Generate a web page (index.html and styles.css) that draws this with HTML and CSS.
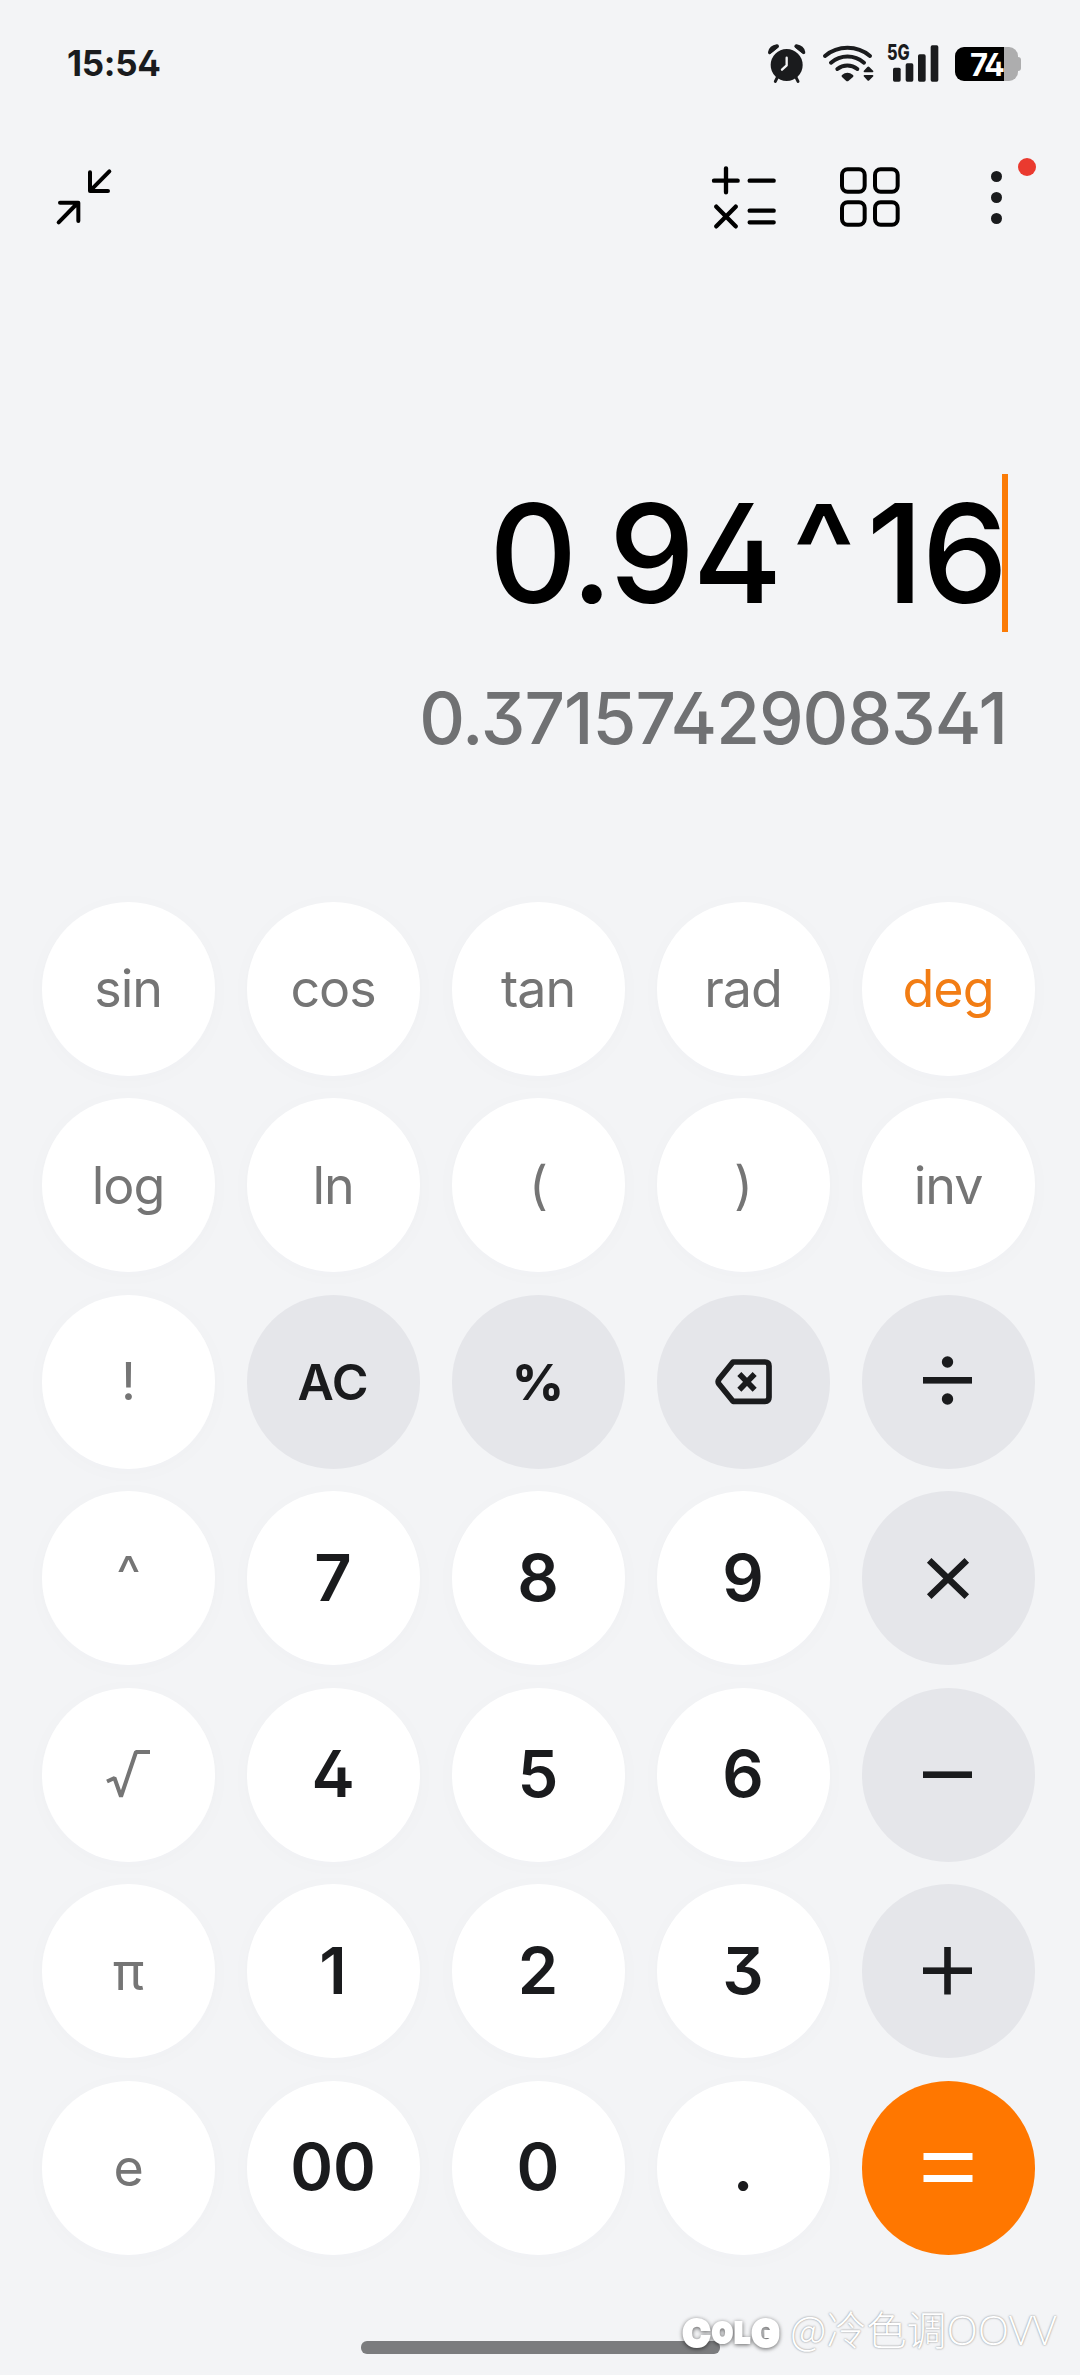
FILE: index.html
```html
<!DOCTYPE html>
<html lang="zh-CN">
<head>
  <meta charset="UTF-8">
  <title>Calculator</title>
  <link rel="stylesheet" href="styles.css">
</head>
<body>

  <!-- Phone status bar -->
  <div class="statusbar">
    <span class="time">15:54</span>
    <div class="status-icons">
      <svg class="alarm" width="37" height="39" viewBox="84 70 111 117">
        <circle cx="140" cy="133" r="48" fill="#1a1b1d"/>
        <path d="M90 95 Q93 80 111 77 Z" stroke="#1a1b1d" stroke-width="12" stroke-linecap="round" stroke-linejoin="round" fill="#1a1b1d"/>
        <path d="M169 77 Q187 80 190 95 Z" stroke="#1a1b1d" stroke-width="12" stroke-linecap="round" stroke-linejoin="round" fill="#1a1b1d"/>
        <path d="M82 110 L122 80 M158 80 L198 110" stroke="#f3f4f6" stroke-width="5"/>
        <path d="M112 170 L106 182 M168 170 L174 182" stroke="#1a1b1d" stroke-width="9" stroke-linecap="round"/>
        <path d="M140 111 V134 L126 147" stroke="#f3f4f6" stroke-width="7" stroke-linecap="round" stroke-linejoin="round" fill="none"/>
      </svg>
      <svg class="wifi" width="51" height="37" viewBox="248 74 153 111">
        <g fill="none" stroke="#1a1b1d" stroke-width="12" stroke-linecap="round">
          <path d="M254 107 A105 105 0 0 1 389 107"/>
          <path d="M272 127 A76 76 0 0 1 371 127"/>
          <path d="M291 146 A48 48 0 0 1 351 146"/>
        </g>
        <path d="M305 164 Q321 150 338 164 Q341 167 338 170 L325 181 Q321 184 317 181 L305 170 Q302 167 305 164 Z" fill="#1a1b1d"/>
        <path d="M370 152 L381 140 Q384 137 387 140 L399 152 Q400 156 396 156 L373 156 Q369 156 370 152 Z M370 168 L381 180 Q384 183 387 180 L399 168 Q400 164 396 164 L373 164 Q369 164 370 168 Z" fill="#1a1b1d"/>
      </svg>
      <svg class="signal" width="52" height="38" viewBox="441 71 156 114">
        <text x="441" y="120" class="signal-label" textLength="68" lengthAdjust="spacingAndGlyphs">5G</text>
        <g fill="#1a1b1d">
          <rect x="459" y="142" width="23" height="42" rx="5"/>
          <rect x="497" y="129" width="23" height="55" rx="5"/>
          <rect x="534" y="102" width="23" height="82" rx="5"/>
          <rect x="572" y="75" width="23" height="109" rx="5"/>
        </g>
      </svg>
      <div class="battery">
        <div class="battery-body"><span>74</span></div>
        <div class="battery-tip"></div>
      </div>
    </div>
  </div>

  <!-- Top toolbar -->
  <div class="toolbar">
    <svg width="56" height="56" viewBox="77 448 168 168" fill="none" stroke="#000" stroke-width="12" stroke-linecap="round" stroke-linejoin="round">
      <path d="M237 455 L180 513 M179 458 V514 H233"/>
      <path d="M85 608 L142 550 M89 549 H144 V604"/>
    </svg>
    <div class="toolbar-right">
      <svg width="64" height="63" viewBox="97 74 192 189" fill="none" stroke="#000" stroke-width="13" stroke-linecap="round">
        <path d="M103 118 H174 M139 81 V153 M210 118 H282 M210 208 H282 M210 243 H282 M110 196 L168 255 M168 196 L110 255"/>
      </svg>
      <svg width="60" height="60" viewBox="480 82 180 180" fill="none" stroke="#000" stroke-width="12">
        <rect x="486" y="89" width="68" height="67" rx="17"/>
        <rect x="585" y="89" width="68" height="67" rx="17"/>
        <rect x="486" y="188" width="68" height="67" rx="17"/>
        <rect x="585" y="188" width="68" height="67" rx="17"/>
      </svg>
      <div class="more">
        <i></i><i></i><i></i>
        <b class="red-dot"></b>
      </div>
    </div>
  </div>

  <!-- Expression and live result -->
  <div class="display">
    <div class="expression"><span class="base">0.94</span><span class="power">^</span><span class="exponent">16</span><div class="cursor"></div></div>
    <div class="result">0.3715742908341</div>
  </div>

  <!-- Keypad -->
  <div class="keypad">
    <div class="key fn">sin</div>
    <div class="key fn">cos</div>
    <div class="key fn">tan</div>
    <div class="key fn">rad</div>
    <div class="key fn active">deg</div>

    <div class="key fn">log</div>
    <div class="key fn">ln</div>
    <div class="key fn">(</div>
    <div class="key fn">)</div>
    <div class="key fn">inv</div>

    <div class="key fn">!</div>
    <div class="key op">AC</div>
    <div class="key op percent">%</div>
    <div class="key op">
      <svg width="57" height="46" viewBox="524 236 171 138" fill="none" stroke="#1a1b1d" stroke-width="17">
        <path d="M578 245 H674 Q686 245 686 257 V351 Q686 363 674 363 H578 L536 311 Q531 304 536 297 Z" stroke-linejoin="round"/>
        <path d="M597 281 L643 328 M643 281 L597 328"/>
      </svg>
    </div>
    <div class="key op">
      <svg width="50" height="50" viewBox="0 0 50 50" fill="#1a1b1d">
        <circle cx="24.5" cy="5" r="5.7"/>
        <rect x="0" y="20" width="49" height="6.6"/>
        <circle cx="24.5" cy="42" r="5.7"/>
      </svg>
    </div>

    <div class="key fn hat">^</div>
    <div class="key num">7</div>
    <div class="key num">8</div>
    <div class="key num">9</div>
    <div class="key op">
      <svg width="50" height="50" viewBox="0 0 50 50" stroke="#1a1b1d" stroke-width="6.5">
        <path d="M6.2 7.3 L43.8 43.7 M43.8 7.3 L6.2 43.7"/>
      </svg>
    </div>

    <div class="key fn">
      <svg width="44" height="50" viewBox="0 0 44 50" fill="none" stroke="#757575" stroke-width="4">
        <path d="M1 31.5 L8.5 28 L15 46.5 L30 2 H44" stroke-linejoin="bevel"/>
      </svg>
    </div>
    <div class="key num">4</div>
    <div class="key num">5</div>
    <div class="key num">6</div>
    <div class="key op">
      <svg width="50" height="50" viewBox="0 0 50 50" fill="#1a1b1d">
        <rect x="0" y="21.4" width="49" height="6.6"/>
      </svg>
    </div>

    <div class="key fn">π</div>
    <div class="key num">1</div>
    <div class="key num">2</div>
    <div class="key num">3</div>
    <div class="key op">
      <svg width="50" height="50" viewBox="0 0 50 50" fill="#1a1b1d">
        <rect x="0" y="21.4" width="49" height="6.6"/>
        <rect x="21.2" y="1" width="6.6" height="47.5"/>
      </svg>
    </div>

    <div class="key fn">e</div>
    <div class="key num">00</div>
    <div class="key num">0</div>
    <div class="key num">.</div>
    <div class="key equals">
      <svg width="50" height="50" viewBox="0 0 50 50" fill="#fff">
        <rect x="0.5" y="10" width="49" height="7"/>
        <rect x="0.5" y="32" width="49" height="7"/>
      </svg>
    </div>
  </div>

  <!-- Gesture bar with the watermark over it -->
  <div class="home-bar"></div>
  <div class="watermark">
    <span class="colg"><span class="big">C</span><span>O</span><span>L</span><span class="big">G</span></span>
    <span class="user">@冷色调<span class="latin">OOVV</span></span>
  </div>

</body>
</html>
```
FILE: styles.css
```css
* {
  box-sizing: border-box;
}

body {
  margin: 0;
  width: 1080px;
  height: 2375px;
  position: relative;
  overflow: hidden;
  background: #f3f4f6;
  font-family: Inter, "Noto Sans CJK SC", sans-serif;
  /* flat-top 3, open 4 */
  font-feature-settings: "cv09", "cv02";
  color: #1a1b1d;
}

svg {
  display: block;
  overflow: visible;
}

/* Status bar */
.statusbar {
  display: flex;
  align-items: center;
  justify-content: space-between;
  height: 126px;
  padding: 0 59px 0 67px;
}
.time {
  font-size: 35px;
  font-weight: 700;
  letter-spacing: -0.3px;
}
.status-icons {
  display: flex;
  align-items: center;
}
.wifi {
  margin-left: 18px;
}
.signal {
  margin-left: 13px;
}
.signal-label {
  font-size: 64px;
  font-weight: 800;
  fill: #1a1b1d;
}
.battery {
  display: flex;
  align-items: center;
  margin: 2px 0 0 16px;
}
.battery-body {
  width: 63px;
  height: 34px;
  border-radius: 9px;
  background: linear-gradient(to right, #000 49px, #adadae 49px);
  color: #fff;
  font-size: 31px;
  font-weight: 700;
  line-height: 35px;
  letter-spacing: -2px;
  padding-left: 15px;
}
.battery-tip {
  width: 3px;
  height: 14px;
  border-radius: 0 3px 3px 0;
  background: #adadae;
}

/* Toolbar */
.toolbar {
  display: flex;
  align-items: center;
  justify-content: space-between;
  height: 142px;
  padding: 0 78px 0 56px;
}
.toolbar-right {
  display: flex;
  align-items: center;
}
.toolbar-right svg + svg {
  margin-left: 64px;
}
.more {
  position: relative;
  display: flex;
  flex-direction: column;
  gap: 10px;
  margin-left: 91px;
}
.more i {
  width: 11px;
  height: 11px;
  border-radius: 50%;
  background: #1a1b1d;
}
.red-dot {
  position: absolute;
  top: -13px;
  left: 27px;
  width: 18px;
  height: 18px;
  border-radius: 50%;
  background: #ea3a2f;
}

/* Display */
.display {
  height: 634px;
  padding: 206px 72px 0 0;
}
.expression {
  display: flex;
  justify-content: flex-end;
  height: 158px;
  font-size: 137px;
  font-weight: 500;
  line-height: 158px;
  color: #000;
}
.base {
  letter-spacing: -2.6px;
}
.power {
  width: 80px;
  margin: -4px 3px 0 4px;
  font-size: 130px;
  font-weight: 600;
  text-align: center;
}
.exponent {
  margin-right: -4px;
  letter-spacing: -2px;
}
.cursor {
  width: 6px;
  height: 158px;
  background: #fb7b06;
}
.result {
  margin-top: 43px;
  padding-right: 1px;
  font-size: 71px;
  font-weight: 500;
  line-height: 86px;
  letter-spacing: -1px;
  text-align: right;
  color: #707173;
}

/* Keypad */
.keypad {
  display: grid;
  grid-template-columns: repeat(5, 173.6px);
  grid-auto-rows: 173.6px;
  gap: 22.9px 31.4px;
  padding-left: 41.8px;
}
.key {
  display: flex;
  align-items: center;
  justify-content: center;
  border-radius: 50%;
  background: #fff;
  padding-right: 1px;
  box-shadow: 0 3px 24px rgba(60, 70, 80, 0.018);
}
.fn {
  font-size: 52px;
  font-weight: 370;
  letter-spacing: -1px;
  color: #757575;
}
.hat {
  padding-bottom: 8px;
}
.active {
  color: #f27d14;
}
.num {
  font-size: 65px;
  font-weight: 600;
  padding-bottom: 2px;
}
.op {
  background: #e5e6ea;
  box-shadow: none;
  font-size: 50px;
  font-weight: 600;
}
.percent {
  font-weight: 800;
}
.equals {
  background: #ff7700;
  box-shadow: none;
}

/* Bottom */
.home-bar {
  width: 359px;
  height: 13px;
  margin: 86px auto 0;
  border-radius: 6px;
  background: #7b7c7e;
}
.watermark {
  position: absolute;
  left: 683px;
  top: 2302px;
  display: flex;
  align-items: center;
  height: 58px;
  color: #fff;
}
.colg {
  display: flex;
  align-items: center;
  gap: 3px;
  width: 107px;
  font-size: 25px;
  font-weight: 700;
  padding-top: 4px;
  -webkit-text-stroke: 4px #fff;
  filter: drop-shadow(0 1px 2px rgba(0, 0, 0, 0.6));
}
.colg .big {
  font-size: 36px;
}
.user {
  font-family: "Noto Sans CJK SC", sans-serif;
  font-size: 40px;
  font-weight: 300;
  line-height: 58px;
  white-space: nowrap;
  padding-bottom: 6px;
  text-shadow: 0 0 2px rgba(0, 0, 0, 0.5);
}
.latin {
  font-family: "Open Sans", "Noto Sans", sans-serif;
  font-size: 41px;
}
```
